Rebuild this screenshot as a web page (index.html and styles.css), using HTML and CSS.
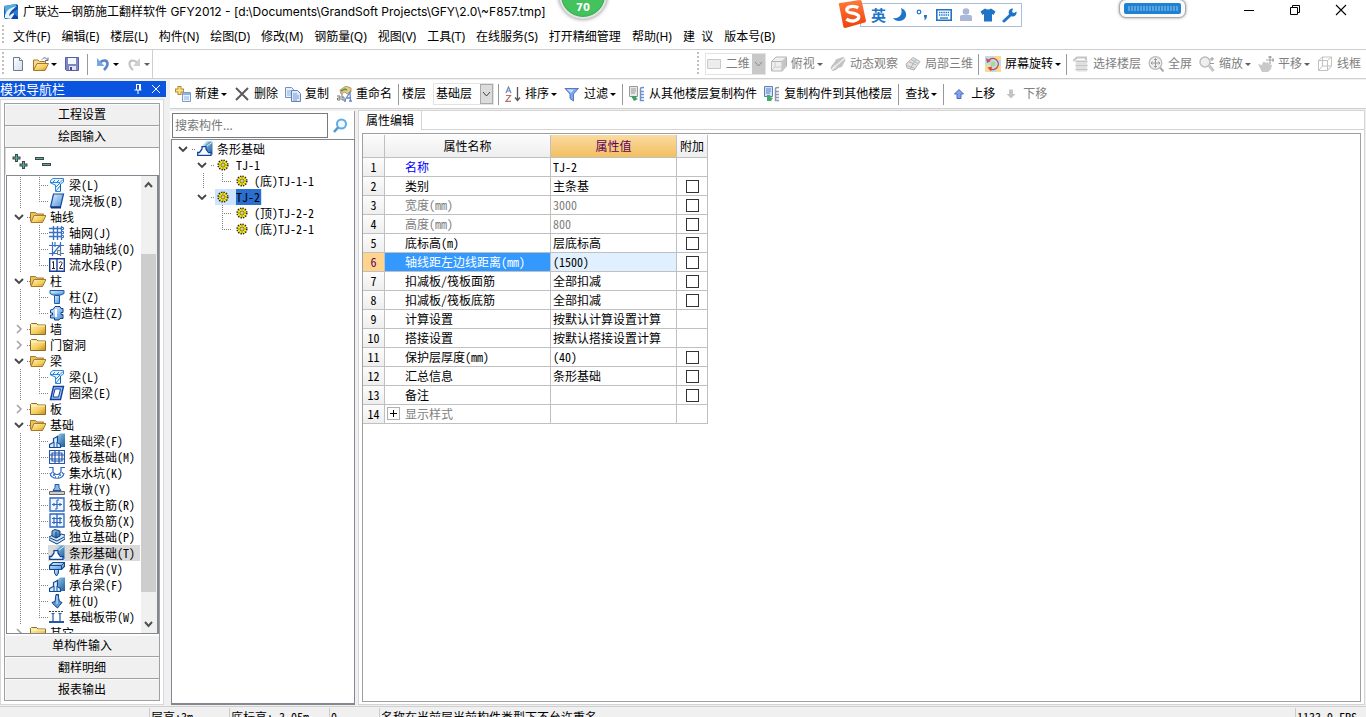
FILE: index.html
```html
<!DOCTYPE html>
<html lang="zh-CN">
<head>
<meta charset="utf-8">
<title>广联达—钢筋施工翻样软件 GFY2012</title>
<link rel="stylesheet" href="styles.css">
</head>
<body>
<svg class="defs" aria-hidden="true">
<defs>
<linearGradient id="gFold" x1="0" y1="0" x2="1" y2="1"><stop offset="0" stop-color="#fff3b8"/><stop offset=".6" stop-color="#f4cc58"/><stop offset="1" stop-color="#c98a1c"/></linearGradient>
<linearGradient id="gBlue" x1="0" y1="0" x2="1" y2="1"><stop offset="0" stop-color="#e4f3ff"/><stop offset="1" stop-color="#4a8fd8"/></linearGradient>
<linearGradient id="gDeep" x1="0" y1="0" x2="1" y2="1"><stop offset="0" stop-color="#9fd0ee"/><stop offset="1" stop-color="#1c5c9c"/></linearGradient>
<linearGradient id="gLogo" x1="0" y1="0" x2="1" y2="1"><stop offset="0" stop-color="#1b6fc0"/><stop offset="1" stop-color="#0b3fa8"/></linearGradient>
<linearGradient id="gSogou" x1="0" y1="0" x2="0" y2="1"><stop offset="0" stop-color="#ff7a3c"/><stop offset="1" stop-color="#f0400c"/></linearGradient>
<linearGradient id="gPaper" x1="0" y1="0" x2="1" y2="1"><stop offset="0" stop-color="#fff"/><stop offset="1" stop-color="#d4dcec"/></linearGradient>
</defs>
<symbol id="logo" viewBox="0 0 16 16"><path d="M1 2 13 0l2 1v14H2L1 13z" fill="url(#gLogo)"/><path d="M1 2 13 0v2L8 4 3 10z" fill="#57a9e2"/><path d="M2 11C4 5 9 3 14 2 10 5 7 7 6 12l8-6-6 9-6-1z" fill="#e8f4fd"/><path d="M10 9l5-4v8z" fill="#2c7ccc"/></symbol>
<symbol id="new" viewBox="0 0 16 16"><path d="M3.500 1.500h6l3 3v10h-9z" fill="url(#gPaper)" stroke="#6c7a92"/><path d="M9.500 1.500v3h3" fill="#fff" stroke="#6c7a92"/></symbol>
<symbol id="open" viewBox="0 0 16 16"><path d="M.5 14V4h4.500l1.500 1.500h6V8" fill="#f6dc90" stroke="#a5772c"/><path d="M.5 14.500 4 7.500h11.500L12 14.500z" fill="url(#gFold)" stroke="#a5772c"/><path d="M9 3.500c2-2.500 4-2 5.500.5M15 1.500v3h-3" fill="none" stroke="#5a6f96"/></symbol>
<symbol id="save" viewBox="0 0 16 16"><path d="M1.500 1.500h13v13h-12l-1-1z" fill="#7f86c8" stroke="#5a609f"/><path d="M4 2h8v6H4z" fill="#f4f8ff"/><path d="M5 10h7v4H5z" fill="#dfe3f2"/><path d="M6 11h2v3H6z" fill="#444a85"/></symbol>
<symbol id="undo" viewBox="0 0 16 16"><path d="M5 6.500c4-3.500 7.500-2 7.500 1.500 0 2.500-2 4.500-3.500 6" fill="none" stroke="#5b86cf" stroke-width="2.600"/><path d="M2 2v8h7.500z" fill="#79a5e4"/></symbol>
<symbol id="redo" viewBox="0 0 16 16"><path d="M11 6.500C7 3 3.500 4.500 3.500 8c0 2.500 2 4.500 3.500 6" fill="none" stroke="#c4c4c4" stroke-width="2.200"/><path d="M14 2v8H7z" fill="#cfcfcf"/></symbol>
<symbol id="add" viewBox="0 0 16 16"><path d="M4.500 0v9M0 4.500h9" stroke="#b58a28" stroke-width="4"/><path d="M4.500 1v7M1 4.500h7" stroke="#fbe38a" stroke-width="2"/><path d="M7.500 6.500h8v9h-8z" fill="#eaf2fd" stroke="#7b9ccc"/><path d="M8 7h7v2H8z" fill="#8fb2e3"/><path d="M9 11h5M9 13h5" stroke="#8fb2e3"/></symbol>
<symbol id="del" viewBox="0 0 16 16"><path d="M2 2l12 12M14 2 2 14" stroke="#5c5c5c" stroke-width="2"/></symbol>
<symbol id="copy" viewBox="0 0 16 16"><path d="M.5 1.500h6l2 2v8h-8z" fill="#e6effc" stroke="#7590c0"/><path d="M2 5h4M2 7h4M2 9h4" stroke="#8fabd8"/><path d="M6.500 4.500h6l3 3v8h-9z" fill="#dbe8fb" stroke="#6382b8"/><path d="M8 8h4M8 10h6M8 12h6M8 14h4" stroke="#7c9bd0"/></symbol>
<symbol id="rename" viewBox="0 0 16 16"><path d="M4 4 10 0l5 2v4l-4 2-2-2-4 2z" fill="#e5c987" stroke="#a9894a" stroke-width=".8"/><path d="M5 5l4-2 2 1" fill="none" stroke="#4f9a5a" stroke-width="1.500"/><path d="M1 10h3v4H1.500v-2H4M6 8v6h2v-3H6" fill="none" stroke="#777"/><path d="M8.500 15 14 6l.5 9M11 12h4M8 15h2M13 15h3" fill="none" stroke="#6489cb" stroke-width="1.300"/></symbol>
<symbol id="sort" viewBox="0 0 16 16"><path d="M1 7 3.500 1 6 7M2 5h3" fill="none" stroke="#6e86b8" stroke-width="1.200"/><path d="M1 9.500h4.500L1 15.300h5" fill="none" stroke="#b87070" stroke-width="1.200"/><path d="M12.500 1v13M10 11.500l2.500 3 2.500-3" fill="none" stroke="#555" stroke-width="1.300"/></symbol>
<symbol id="funnel" viewBox="0 0 16 16"><path d="M1 2.500h13.500L9.500 8v7L6 12.500V8z" fill="#7da7ec" stroke="#5577c4"/><path d="M3 3.500h7L7 7z" fill="#c9ddfb"/></symbol>
<symbol id="from" viewBox="0 0 16 16"><path d="M.5.5h8v10h-8z" fill="#e8e8e8" stroke="#999"/><path d="M2 3h5M2 5h5M2 7h4" stroke="#999"/><path d="M2 10l3 5 4-2-2-1 1-2z" fill="#3f9d62"/><path d="M15 1.500c-3 0-3.500 0-3.500 1.500v11.500H15M12 5.500h3M12 8.500h3M12 11.500h3" fill="none" stroke="#6f92cc" stroke-width="1.500"/></symbol>
<symbol id="to" viewBox="0 0 16 16"><path d="M.5.5h8v10h-8z" fill="#cfe0fa" stroke="#5f80bd"/><path d="M2 3h5M2 5h5M2 7h4" stroke="#5f80bd"/><path d="M3 9v6h4l2-3-3-1V9z" fill="#3fae60"/><path d="M15 1.500c-3 0-3.500 0-3.500 1.500v11.500H15M12 5.500h3M12 8.500h3M12 11.500h3" fill="none" stroke="#8f98a6" stroke-width="1.500"/></symbol>
<symbol id="up" viewBox="0 0 10 16"><path d="M5 3.500 9.500 8H7v4.500H3V8H.5z" fill="#7fa2ee" stroke="#4a68b8"/></symbol>
<symbol id="down" viewBox="0 0 10 16"><path d="M5 12.500 9.500 8H7V3.500H3V8H.5z" fill="#c4c4c4"/></symbol>
<symbol id="rect" viewBox="0 0 16 16"><path d="M1.500 3.500h13v9h-13z" fill="#ededed" stroke="#c9c9c9"/></symbol>
<symbol id="cube" viewBox="0 0 16 16"><path d="M.5 5.500 5 1h10.500v9L11 15H.5z" fill="#efefef" stroke="#b4b4b4"/><path d="M.5 5.500H11L15.500 1M11 5.500V15" fill="none" stroke="#b4b4b4"/><path d="M11.500 5.500 15 2v8l-3.500 4z" fill="#c4c4c4"/><path d="M4 6v5h7M4 11l-3 3" fill="none" stroke="#ccc"/></symbol>
<symbol id="orbit" viewBox="0 0 16 16"><ellipse cx="8" cy="8" rx="8.500" ry="3" transform="rotate(-42 8 8)" fill="#d7d7d7" stroke="#b5b5b5"/><circle cx="9" cy="7" r="4.500" fill="#c3c3c3"/><path d="M1 14 15 2" stroke="#eee" stroke-width="1.500"/></symbol>
<symbol id="part" viewBox="0 0 16 16"><path d="M1 8 8 1.500l7 4L9 14l-7-2z" fill="#e3e3e3" stroke="#b3b3b3"/><path d="M3.500 5.500 11 9M6 3.500l7 4M5 13l6-10M2 9.500l8 3" stroke="#b3b3b3" fill="none"/></symbol>
<symbol id="rotate" viewBox="0 0 16 16"><path d="M0 0h16v16H0z" fill="#b9dff3"/><path d="M0 9h6v7H0zM11 10h5v6h-5zM9 0h7v4H9z" fill="#f3dc94"/><path d="M4 4a5.500 5.500 0 1 1 1.500 9" fill="none" stroke="#d8494a" stroke-width="1.400"/><path d="M1 2l1 5 4-2zM2.500 11.500l4.500-1-1 5z" fill="#d8494a"/><circle cx="8" cy="8" r="2.500" fill="#a8d890"/></symbol>
<symbol id="floors" viewBox="0 0 16 16"><path d="M0 5 4 1.500h9V4M2.500 5.500h12M2.500 9.500h12M2.500 13.500h12" fill="none" stroke="#c4c4c4" stroke-width="2"/><path d="M3 7.500h11M3 11.500h11M4 15h10" stroke="#dedede"/></symbol>
<symbol id="full" viewBox="0 0 16 16"><circle cx="7.500" cy="7" r="6.300" fill="#efefef" stroke="#bbb" stroke-width="1.300"/><path d="M7.500 2.500v9M3 7h9M6 4l1.500-1.500L9 4M6 10l1.500 1.500L9 10M4.500 5.500 3 7l1.500 1.500M10.500 5.500 12 7l-1.500 1.500" fill="none" stroke="#999"/><path d="M12 11.500l3.500 4" stroke="#aaa" stroke-width="2"/></symbol>
<symbol id="zoomi" viewBox="0 0 16 16"><circle cx="6" cy="6" r="5" fill="#eee" stroke="#bbb" stroke-width="1.400"/><path d="M10 9.500l4.500 5.500" stroke="#c6c6c6" stroke-width="3"/><path d="M13 1v4M11 3h4M11 7.500h4" stroke="#999"/></symbol>
<symbol id="pan" viewBox="0 0 16 16"><path d="M0 8l4 1 1-3 2 0 1 1 2-1 1 2 3 1-1 4-3 3H4L2 12z" fill="#c9c9c9"/><path d="M12 0v8M8 4h8M10.500 1.500 12 0l1.500 1.500M14.500 2.500 16 4l-1.500 1.500" fill="none" stroke="#a6a6a6" stroke-width="1.200"/></symbol>
<symbol id="wire" viewBox="0 0 16 16"><path d="M1.500 4.500h9v10h-9zM5.500 1h9v9h-9zM1.500 4.500 5.500 1M10.500 4.500l4-3.500M1.500 14.500l4-4.500M10.500 14.500l4-4.500" fill="none" stroke="#c2c2c2"/></symbol>
<symbol id="find" viewBox="0 0 16 16"><circle cx="9.500" cy="6" r="4.500" fill="#f0f8ff" stroke="#5fabe4" stroke-width="2"/><path d="M6 9.500 2 14" stroke="#4c99d8" stroke-width="2.600"/></symbol>
<symbol id="fopen" viewBox="0 0 16 16"><path d="M.5 12.500v-9h5L7 5h6.500v2" fill="#e8c060" stroke="#a57c2c"/><path d="M1 13.500 4 6.500h12L12.500 13.500z" fill="url(#gFold)" stroke="#a57c2c"/></symbol>
<symbol id="fshut" viewBox="0 0 16 16"><path d="M.5 13.500v-10l1-1h5L8 4h7.500v9.500z" fill="url(#gFold)" stroke="#8f6a26"/><path d="M1 5h14" stroke="#fff5c8"/></symbol>
<symbol id="chd" viewBox="0 0 10 16"><path d="M1 6l4 4 4-4" fill="none" stroke="#444" stroke-width="1.800"/></symbol>
<symbol id="chr" viewBox="0 0 10 16"><path d="M3 4l4 4-4 4" fill="none" stroke="#a0a0a0" stroke-width="1.500"/></symbol>
<symbol id="beam" viewBox="0 0 16 16"><path d="M1.500 3.500 4 1.500h10.500v3.500l-3 2V14.500H6.500V8L1.500 6z" fill="#e6f4ff" stroke="#2f86d8"/><path d="M2 5.500h9l3-3M3 6l3-3M7 6l3-3M7 10l4-4M7 14l4-5" fill="none" stroke="#2f86d8"/><path d="M11.500 7V14" stroke="#155faf"/></symbol>
<symbol id="slab" viewBox="0 0 16 16"><path d="M4.500 1h10l-3 13h-10z" fill="url(#gBlue)" stroke="#14489c" stroke-width="1.200"/><path d="M2 14.500h10" stroke="#0f3478" stroke-width="2"/></symbol>
<symbol id="grid" viewBox="0 0 16 16"><path d="M4.500 1v14M8.500 1v14M12.500 1v14M0 3.500h12M0 7.500h12M0 11.500h12" stroke="#3a70c4" stroke-width="1.400"/><path d="M12.500 2.500h2v2h-2zM12.500 6.500h2v2h-2zM12.500 10.500h2v2h-2z" fill="#fff" stroke="#3a70c4"/></symbol>
<symbol id="aux" viewBox="0 0 16 16"><path d="M3.500 1v14M11.500 1v14M0 4.500h15M0 12.500h15M3 14 12 3M6 1v5" stroke="#3a70c4" stroke-width="1.200"/><path d="M8.500 9.500h3v4h-3z" fill="#eee" stroke="#777"/></symbol>
<symbol id="flow" viewBox="0 0 16 16"><path d="M.7 1.700h14.600v12.600H.7zM8 2v12" fill="#fff" stroke="#173f9c" stroke-width="1.400"/><path d="M3 5.500l1.500-1v7M3 11.500h3M10 6c.5-2 3.500-1.500 3 .5L10.500 11.500H14" fill="none" stroke="#222"/></symbol>
<symbol id="col" viewBox="0 0 16 16"><path d="M1 1.500h14v3l-3 1.500H4L1 4.500z" fill="url(#gBlue)" stroke="#1c5cab"/><path d="M5.500 6.500h5v8h-5z" fill="url(#gBlue)" stroke="#1c5cab"/></symbol>
<symbol id="gz" viewBox="0 0 16 16"><path d="M6 1.500h5l1 2h2v4h-2v2h2v4h-3l-1 1.500H5.500v-2H1.500v-3h2v-2h-2v-3l3-1z" fill="url(#gBlue)" stroke="#123f86"/><path d="M7 4v8" stroke="#fff" stroke-width="2"/></symbol>
<symbol id="ring" viewBox="0 0 16 16"><path d="M4.500 1.500h10l-3 13h-10z" fill="#9cc4f4" stroke="#123f9c" stroke-width="1.400"/><path d="M6 4h5.500l-2 8H4z" fill="#fff" stroke="#123f9c"/></symbol>
<symbol id="fbeam" viewBox="0 0 16 16"><path d="M7 4 11 .5h5V14h-4z" fill="url(#gDeep)"/><path d="M.5 14.500v-3l4-2v-4l4-2v6l3 2v3z" fill="#d8eaff" stroke="#0f4a94" stroke-width="1.200"/><path d="M5 9v5M8 9v5" stroke="#0f4a94"/></symbol>
<symbol id="raft" viewBox="0 0 16 16"><path d="M.5 1.500h15v13H.5zM3 4h10v8H3zM6 1v14M10 1v14M0 6h16M0 10h16" fill="none" stroke="#2457ab" stroke-width="1.200"/></symbol>
<symbol id="pit" viewBox="0 0 16 16"><path d="M0 2.500h4v5l3 2h2l3-2v-5h4M1 8c1 7 13 7 14 0" fill="none" stroke="#2c66c0" stroke-width="1.200"/><path d="M2 8h1M4 10h2M10 10h2M13 8h1M6 12h1M9 12h1" stroke="#2c66c0" stroke-width="1.500"/></symbol>
<symbol id="pier" viewBox="0 0 16 16"><path d="M6 3.500h4v3l2 3H4l2-3z" fill="#8ab8ee" stroke="#1c56a8"/><path d="M.5 10.500h15v3H.5z" fill="#ccc" stroke="#666"/></symbol>
<symbol id="rmain" viewBox="0 0 16 16"><path d="M1 1h14v13H1z" fill="#eef5ff" stroke="#2c66c0" stroke-width="1.300"/><path d="M8 3v9M3 7.500h10M5 6v3M11 6v3M8 3h2M6 12h2" stroke="#2c66c0" stroke-width="1.200"/></symbol>
<symbol id="rneg" viewBox="0 0 16 16"><path d="M1 1h14v13H1zM8 1v13" fill="#eef5ff" stroke="#2c66c0" stroke-width="1.300"/><path d="M3 5.500h10M3 9.500h10M5 4v7M11 4v7" stroke="#2c66c0" stroke-width="1.200"/></symbol>
<symbol id="iso" viewBox="0 0 16 16"><path d="M0 8l4-2 3 3 5-4 4 1v4l-8 5-8-4z" fill="#cfe6fb" stroke="#0f3f80"/><path d="M3 2l3-1.500L11 2v5L7 9 3 7z" fill="url(#gDeep)" stroke="#0f3f80"/><path d="M7 3v6M1 9l7 3 7-4" fill="none" stroke="#0f3f80"/></symbol>
<symbol id="strip" viewBox="0 0 16 16"><path d="M5 5.500 9.500.5H15.500V14L12 10.500 9 8z" fill="url(#gDeep)"/><path d="M6 5.500 10.500 1M9 6 15.500 1" stroke="#dff0fa"/><path d="M.7 14.300v-2.800h1.800L5 8V5.600h4V8l2.500 3.500H14v2.800z" fill="#fff" stroke="#10499c" stroke-width="1.300"/></symbol>
<symbol id="cap" viewBox="0 0 16 16"><path d="M.5 4.500 4 1.500h11.500v4l-3 3H.5z" fill="url(#gBlue)" stroke="#0f4a94" stroke-width="1.200"/><path d="M.5 4.500H12.500l3-3M12.500 4.500v4" fill="none" stroke="#0f4a94"/><path d="M5.500 8.500h4V12l-2 3-2-3z" fill="url(#gBlue)" stroke="#0f4a94"/></symbol>
<symbol id="pile" viewBox="0 0 16 16"><path d="M7 1.500h2.500v3l1 4 2.500 1-2.500 3-2 2.500-3-2.500-2.500-3 3-1z" fill="#5b9ad6" stroke="#0f3f80"/><path d="M8 3v8" stroke="#d6eaff"/></symbol>
<symbol id="band" viewBox="0 0 16 16"><path d="M0 2.500h15" stroke="#444" stroke-dasharray="2 1"/><path d="M0 13h15" stroke="#2457ab" stroke-width="2"/><path d="M4 4v8M2.500 4.500h3M11 4v8M9.500 4.500h3" stroke="#2457ab" stroke-width="1.200"/></symbol>
<symbol id="gear" viewBox="0 0 16 16"><circle cx="8" cy="8" r="4.800" fill="#ffee20" stroke="#222" stroke-width="1.600" stroke-dasharray="1.400 1.100"/><circle cx="8" cy="8" r="4" fill="#f7e614"/><path d="M8 4v8M4 8h8M5.500 5.500l5 5M10.500 5.500l-5 5" stroke="#6e6800" stroke-width=".7"/><circle cx="8" cy="8" r="1.300" fill="#fff" stroke="#555" stroke-width=".5"/></symbol>
<symbol id="caret" viewBox="0 0 6 16"><path d="M0 7h6L3 10z"/></symbol>
</svg>

<header class="titlebar">
  <svg class="i"><use href="#logo"/></svg>
  <h1>广联达—钢筋施工翻样软件 GFY2012 - [d:\Documents\GrandSoft Projects\GFY\2.0\~F857.tmp]</h1>
  <div class="winbtns">
    <button aria-label="最小化"><svg viewBox="0 0 12 12"><path d="M1 6.500h10" stroke="#000"/></svg></button>
    <button aria-label="还原"><svg viewBox="0 0 12 12"><path d="M1.500 3.500h7v7h-7zM3.500 3.500v-2h7v7h-2" fill="none" stroke="#000"/></svg></button>
    <button aria-label="关闭"><svg viewBox="0 0 12 12"><path d="M1 1l10 10M11 1 1 11" stroke="#000" stroke-width="1.100"/></svg></button>
  </div>
  <div class="badge">70</div>
  <div class="ime">
    <svg class="sogou" viewBox="0 0 28 28"><path d="M2 5Q1 3 3 3L22 0q2 0 2 2l4 18q0 2-2 2L8 27q-2 0-2-2z" fill="url(#gSogou)"/><path d="M20.500 7.500C16 5 9 6 9.500 10c.5 3.500 11 2 11.500 6 0 4.500-8 5.500-12 2.500" fill="none" stroke="#fff" stroke-width="3.200"/></svg>
    <b>英</b>
    <svg viewBox="0 0 16 16"><path d="M9 1c6 2 7 9 2 12-4 2-8 1-10-2 7 1 10-4 8-10z" fill="#1f74c8"/></svg>
    <svg viewBox="0 0 16 16"><circle cx="5" cy="5" r="1.800" fill="none" stroke="#1f74c8" stroke-width="1.200"/><path d="M10 8h3c0 3-1 5-3 5.500 1-1.500 1-2.500 0-3.500z" fill="#1f74c8"/></svg>
    <svg viewBox="0 0 16 16"><path d="M.8 2.800h14.400v10.400H.8z" fill="none" stroke="#1f74c8" stroke-width="1.600"/><path d="M3 5.500h10M3 8h10" stroke="#1f74c8" stroke-width="1.400" stroke-dasharray="1.400 .8"/><path d="M4 11h8" stroke="#1f74c8" stroke-width="1.300"/></svg>
    <svg viewBox="0 0 16 16"><circle cx="8" cy="4.500" r="3.300" fill="#a9b8d6"/><path d="M2 14V10q0-2 2-2h8q2 0 2 2v4z" fill="#a9b8d6"/></svg>
    <svg viewBox="0 0 16 16"><path d="M5 1.500q3 2 6 0l4.500 3-2 3.500-1.500-1v7.500H4V7L2.500 8l-2-3.500z" fill="#1f74c8"/></svg>
    <svg viewBox="0 0 16 16"><path d="M2 14 9.500 7" stroke="#1f74c8" stroke-width="3" stroke-linecap="round"/><path d="M14.500 4.500A4 4 0 1 1 11 1.500L10 5l2 1z" fill="#1f74c8"/></svg>
  </div>
  <div class="meter"><span></span></div>
</header>

<nav class="menubar grip">
  <button>文件(F)</button><button>编辑(E)</button><button>楼层(L)</button><button>构件(N)</button><button>绘图(D)</button><button>修改(M)</button><button>钢筋量(Q)</button><button>视图(V)</button><button>工具(T)</button><button>在线服务(S)</button><button>打开精细管理</button><button>帮助(H)</button><button>建&nbsp; 议</button><button>版本号(B)</button>
</nav>

<div class="bars">
  <div class="bar filebar grip">
    <button aria-label="新建"><svg class="i"><use href="#new"/></svg></button>
    <button aria-label="打开"><svg class="i"><use href="#open"/></svg><svg class="c"><use href="#caret"/></svg></button>
    <button aria-label="保存"><svg class="i"><use href="#save"/></svg></button>
    <i class="sep"></i>
    <button aria-label="撤销"><svg class="i"><use href="#undo"/></svg><svg class="c"><use href="#caret"/></svg></button>
    <button aria-label="恢复" disabled><svg class="i"><use href="#redo"/></svg><svg class="c"><use href="#caret"/></svg></button>
  </div>
  <div class="bar viewbar grip">
    <div class="combo off"><svg class="i"><use href="#rect"/></svg><select aria-label="视图维度" disabled><option>二维</option></select><svg class="drop" viewBox="0 0 13 20"><path d="M3 8l3.500 4L10 8" fill="none" stroke="#888"/></svg></div>
    <button disabled><svg class="i"><use href="#cube"/></svg>俯视<svg class="c"><use href="#caret"/></svg></button>
    <button disabled><svg class="i"><use href="#orbit"/></svg>动态观察</button>
    <button disabled><svg class="i"><use href="#part"/></svg>局部三维</button>
    <i class="sep"></i>
    <button><svg class="i"><use href="#rotate"/></svg>屏幕旋转<svg class="c"><use href="#caret"/></svg></button>
    <i class="sep"></i>
    <button disabled><svg class="i"><use href="#floors"/></svg>选择楼层</button>
    <button disabled><svg class="i"><use href="#full"/></svg>全屏</button>
    <button disabled><svg class="i"><use href="#zoomi"/></svg>缩放<svg class="c"><use href="#caret"/></svg></button>
    <button disabled><svg class="i"><use href="#pan"/></svg>平移<svg class="c"><use href="#caret"/></svg></button>
    <button disabled><svg class="i"><use href="#wire"/></svg>线框</button>
  </div>
</div>

<main class="work">
  <aside class="nav">
    <div class="navhead"><h2>模块导航栏</h2>
      <button aria-label="固定"><svg viewBox="0 0 10 10"><path d="M3 .5h5M3.500 0v6M6.500 0v6M7.500 0v6M1.500 6h7M5 6v4" stroke="#fff" fill="none"/></svg></button>
      <button aria-label="关闭"><svg viewBox="0 0 10 10"><path d="M1 1l8 8M9 1 1 9" stroke="#fff"/></svg></button>
    </div>
    <div class="frame"><div class="stack">
      <button class="fold">工程设置</button>
      <button class="fold">绘图输入</button>
      <div class="expand">
        <button aria-label="全部展开"><svg viewBox="0 0 16 16"><path d="M4.500 0v8M.5 4h8M11.500 7v8M7.500 11h8" stroke="#444" stroke-width="3"/><path d="M4.500 1v6M1.500 4h6M11.500 8v6M8.500 11h6" stroke="#4fb0a8" stroke-width="1.200"/></svg></button>
        <button aria-label="全部折叠"><svg viewBox="0 0 16 16"><path d="M0 4.500h9M7 10.500h9" stroke="#444" stroke-width="3"/><path d="M1 4.500h7M8 10.500h7" stroke="#4fb0a8" stroke-width="1.200"/></svg></button>
      </div>
      <div class="treebox">
        <ul class="tree">
          <li><ul class="kids">
            <li><svg class="i"><use href="#beam"/></svg><span>梁(L)</span></li>
            <li><svg class="i"><use href="#slab"/></svg><span>现浇板(B)</span></li></ul></li>
          <li><div class="node"><svg class="ch"><use href="#chd"/></svg><svg class="i"><use href="#fopen"/></svg><span>轴线</span></div>
            <ul class="kids">
            <li><svg class="i"><use href="#grid"/></svg><span>轴网(J)</span></li>
            <li><svg class="i"><use href="#aux"/></svg><span>辅助轴线(O)</span></li>
            <li><svg class="i"><use href="#flow"/></svg><span>流水段(P)</span></li></ul></li>
          <li><div class="node"><svg class="ch"><use href="#chd"/></svg><svg class="i"><use href="#fopen"/></svg><span>柱</span></div>
            <ul class="kids">
            <li><svg class="i"><use href="#col"/></svg><span>柱(Z)</span></li>
            <li><svg class="i"><use href="#gz"/></svg><span>构造柱(Z)</span></li></ul></li>
          <li><div class="node"><svg class="ch"><use href="#chr"/></svg><svg class="i"><use href="#fshut"/></svg><span>墙</span></div></li>
          <li><div class="node"><svg class="ch"><use href="#chr"/></svg><svg class="i"><use href="#fshut"/></svg><span>门窗洞</span></div></li>
          <li><div class="node"><svg class="ch"><use href="#chd"/></svg><svg class="i"><use href="#fopen"/></svg><span>梁</span></div>
            <ul class="kids">
            <li><svg class="i"><use href="#beam"/></svg><span>梁(L)</span></li>
            <li><svg class="i"><use href="#ring"/></svg><span>圈梁(E)</span></li></ul></li>
          <li><div class="node"><svg class="ch"><use href="#chr"/></svg><svg class="i"><use href="#fshut"/></svg><span>板</span></div></li>
          <li><div class="node"><svg class="ch"><use href="#chd"/></svg><svg class="i"><use href="#fopen"/></svg><span>基础</span></div>
            <ul class="kids">
            <li><svg class="i"><use href="#fbeam"/></svg><span>基础梁(F)</span></li>
            <li><svg class="i"><use href="#raft"/></svg><span>筏板基础(M)</span></li>
            <li><svg class="i"><use href="#pit"/></svg><span>集水坑(K)</span></li>
            <li><svg class="i"><use href="#pier"/></svg><span>柱墩(Y)</span></li>
            <li><svg class="i"><use href="#rmain"/></svg><span>筏板主筋(R)</span></li>
            <li><svg class="i"><use href="#rneg"/></svg><span>筏板负筋(X)</span></li>
            <li><svg class="i"><use href="#iso"/></svg><span>独立基础(P)</span></li>
            <li class="cur"><svg class="i"><use href="#strip"/></svg><span>条形基础(T)</span></li>
            <li><svg class="i"><use href="#cap"/></svg><span>桩承台(V)</span></li>
            <li><svg class="i"><use href="#fbeam"/></svg><span>承台梁(F)</span></li>
            <li><svg class="i"><use href="#pile"/></svg><span>桩(U)</span></li>
            <li><svg class="i"><use href="#band"/></svg><span>基础板带(W)</span></li></ul></li>
          <li><div class="node"><svg class="ch"><use href="#chr"/></svg><svg class="i"><use href="#fshut"/></svg><span>其它</span></div></li>
        </ul>
        <div class="scroll">
          <svg viewBox="0 0 15 17"><path d="M4 11l3.500-4 3.500 4" fill="none" stroke="#505050" stroke-width="2"/></svg>
          <div class="track"><div class="thumb"></div></div>
          <svg viewBox="0 0 15 17"><path d="M4 6l3.500 4L11 6" fill="none" stroke="#505050" stroke-width="2"/></svg>
        </div>
      </div>
      <button class="fold">单构件输入</button>
      <button class="fold">翻样明细</button>
      <button class="fold">报表输出</button>
    </div></div>
  </aside>

  <section class="desk">
    <div class="bar partbar">
      <button><svg class="i"><use href="#add"/></svg>新建<svg class="c"><use href="#caret"/></svg></button>
      <button><svg class="i"><use href="#del"/></svg>删除</button>
      <button><svg class="i"><use href="#copy"/></svg>复制</button>
      <button><svg class="i"><use href="#rename"/></svg>重命名</button>
      <i class="sep"></i>
      <label for="floor">楼层</label>
      <div class="combo"><select id="floor"><option>基础层</option></select><svg class="drop" viewBox="0 0 13 20"><path d="M3 8l3.500 4L10 8" fill="none" stroke="#444"/></svg></div>
      <i class="sep"></i>
      <button><svg class="i"><use href="#sort"/></svg>排序<svg class="c"><use href="#caret"/></svg></button>
      <button><svg class="i"><use href="#funnel"/></svg>过滤<svg class="c"><use href="#caret"/></svg></button>
      <i class="sep"></i>
      <button><svg class="i"><use href="#from"/></svg>从其他楼层复制构件</button>
      <button><svg class="i"><use href="#to"/></svg>复制构件到其他楼层</button>
      <i class="sep"></i>
      <button>查找<svg class="c"><use href="#caret"/></svg></button>
      <i class="sep"></i>
      <button class="move"><svg class="i"><use href="#up"/></svg>上移</button>
      <button class="move" disabled><svg class="i"><use href="#down"/></svg>下移</button>
    </div>
    <div class="panes">
      <div class="parts">
        <div class="search"><input type="text" placeholder="搜索构件..." aria-label="搜索构件"><button aria-label="搜索"><svg class="i"><use href="#find"/></svg></button></div>
        <ul class="tree ptree">
          <li><div class="node"><svg class="ch"><use href="#chd"/></svg><svg class="i"><use href="#strip"/></svg><span>条形基础</span></div>
            <ul>
              <li><div class="node sub"><svg class="ch"><use href="#chd"/></svg><div class="item"><svg class="i"><use href="#gear"/></svg><span>TJ-1</span></div></div>
                <ul class="kids"><li><svg class="i"><use href="#gear"/></svg><span>(底)TJ-1-1</span></li></ul></li>
              <li><div class="node sub"><svg class="ch"><use href="#chd"/></svg><div class="item sel"><svg class="i"><use href="#gear"/></svg><span>TJ-2</span></div></div>
                <ul class="kids bare"><li><svg class="i"><use href="#gear"/></svg><span>(顶)TJ-2-2</span></li><li><svg class="i"><use href="#gear"/></svg><span>(底)TJ-2-1</span></li></ul></li>
            </ul></li>
        </ul>
      </div>
      <div class="props">
        <div class="tabs"><button>属性编辑</button></div>
        <div class="sheet">
          <table>
            <colgroup><col class="n"><col class="k"><col class="v"><col class="x"></colgroup>
            <thead><tr><th></th><th>属性名称</th><th class="hot">属性值</th><th>附加</th></tr></thead>
            <tbody>
              <tr><th>1</th><td class="link">名称</td><td>TJ-2</td><td></td></tr>
              <tr><th>2</th><td>类别</td><td>主条基</td><td><input type="checkbox" aria-label="附加 类别"></td></tr>
              <tr class="dim"><th>3</th><td>宽度(mm)</td><td>3000</td><td><input type="checkbox" aria-label="附加 宽度"></td></tr>
              <tr class="dim"><th>4</th><td>高度(mm)</td><td>800</td><td><input type="checkbox" aria-label="附加 高度"></td></tr>
              <tr><th>5</th><td>底标高(m)</td><td>层底标高</td><td><input type="checkbox" aria-label="附加 底标高"></td></tr>
              <tr class="on"><th>6</th><td>轴线距左边线距离(mm)</td><td>(1500)</td><td><input type="checkbox" aria-label="附加 轴线距左边线距离"></td></tr>
              <tr><th>7</th><td>扣减板/筏板面筋</td><td>全部扣减</td><td><input type="checkbox" aria-label="附加 扣减板/筏板面筋"></td></tr>
              <tr><th>8</th><td>扣减板/筏板底筋</td><td>全部扣减</td><td><input type="checkbox" aria-label="附加 扣减板/筏板底筋"></td></tr>
              <tr><th>9</th><td>计算设置</td><td>按默认计算设置计算</td><td></td></tr>
              <tr><th>10</th><td>搭接设置</td><td>按默认搭接设置计算</td><td></td></tr>
              <tr><th>11</th><td>保护层厚度(mm)</td><td>(40)</td><td><input type="checkbox" aria-label="附加 保护层厚度"></td></tr>
              <tr><th>12</th><td>汇总信息</td><td>条形基础</td><td><input type="checkbox" aria-label="附加 汇总信息"></td></tr>
              <tr><th>13</th><td>备注</td><td></td><td><input type="checkbox" aria-label="附加 备注"></td></tr>
              <tr class="dim"><th>14</th><td class="more"><button aria-label="展开"><svg viewBox="0 0 11 11"><path d="M2 5.500h7M5.500 2v7" stroke="#000"/></svg></button>显示样式</td><td></td><td></td></tr>
            </tbody>
          </table>
        </div>
      </div>
    </div>
  </section>
</main>

<footer class="status"><span class="s0"></span><span class="s1">层高:3m</span><span class="s2">底标高:-3.05m</span><span class="s3">0</span><span class="s4">名称在当前层当前构件类型下不允许重名</span><span class="s5">1133.9 FPS</span></footer>
</body>
</html>
```

FILE: styles.css
```css
* { box-sizing: border-box; }
body {
  margin: 0;
  height: 100vh;
  display: flex;
  flex-direction: column;
  overflow: hidden;
  background: #f0f0f0;
  color: #000;
  font: 12px/16px "Noto Sans", "Noto Sans CJK SC", sans-serif;
}
.defs { position: absolute; width: 0; height: 0; }
h1, h2 { margin: 0; font-size: 12px; font-weight: 400; }
ul { list-style: none; margin: 0; padding: 0; }
button, select, input {
  font: inherit;
  color: inherit;
  margin: 0;
  padding: 0;
  border: 0;
  background: none;
  white-space: nowrap;
}
svg { display: block; flex: none; }
.i { width: 16px; height: 16px; }
.c { width: 6px; height: 16px; margin-left: -2px; }

.titlebar {
  position: relative;
  z-index: 1;
  display: flex;
  align-items: center;
  gap: 4px;
  height: 23px;
  padding-left: 3px;
  background: #fff;
}
.titlebar h1 { font-family: Inter, "Noto Sans CJK SC", sans-serif; }
.winbtns { display: flex; margin-left: auto; align-self: flex-start; padding-right: 2px; }
.winbtns button { width: 46px; height: 20px; display: grid; place-items: center; }
.winbtns svg { width: 12px; height: 12px; }

.badge {
  position: absolute;
  left: 559px;
  top: -29px;
  width: 48px;
  height: 48px;
  padding-top: 27px;
  border-radius: 50%;
  border: 2px solid #e4e4e4;
  background: #44c25e;
  box-shadow: 0 0 4px #777, inset 0 0 2px #1d8a3a;
  color: #fff;
  font: bold 10px/16px "DejaVu Sans", sans-serif;
  text-align: center;
}
.ime {
  position: absolute;
  left: 860px;
  top: 3px;
  display: flex;
  align-items: center;
  gap: 6px;
  height: 24px;
  padding: 0 3px 0 10px;
  border: 1px solid #a9bfdc;
  background: #fff;
  color: #1f74c8;
}
.ime b { font: bold 15px/22px "Noto Sans CJK SC", sans-serif; }
.ime svg { width: 16px; height: 16px; }
.ime .sogou { position: absolute; left: -24px; top: -4px; width: 29px; height: 29px; }
.meter {
  position: absolute;
  left: 1119px;
  top: -1px;
  width: 67px;
  height: 19px;
  padding: 3px 4px;
  border: 1px solid #aaa;
  border-radius: 7px;
  background: #fafafa;
  box-shadow: 0 0 3px #999;
}
.meter span {
  display: block;
  height: 11px;
  border: 3px solid #2181d1;
  border-radius: 2px;
  background: repeating-linear-gradient(to right, #2181d1 0 1px, #5aa6e4 1px 3px);
}

.grip { position: relative; }
.grip::before {
  content: "";
  position: absolute;
  left: 2px;
  top: 2px;
  bottom: 4px;
  width: 2px;
  background: repeating-linear-gradient(to bottom, #c0c0c0 0 2px, transparent 2px 4px);
}
.menubar {
  display: flex;
  align-items: center;
  gap: 11px;
  height: 27px;
  padding: 2px 0 0 13px;
  border-bottom: 1px solid #cfcfcf;
  background: #fff;
}
.bars { display: flex; justify-content: space-between; height: 29px; background: #fff; border-bottom: 1px solid #cfcfcf; }
.bar { display: flex; align-items: center; gap: 7px; }
.bar button { display: flex; align-items: center; gap: 4px; }
.bar button:disabled { color: #808080; fill: #606060; }
.sep { flex: none; width: 1px; height: 21px; background: #999; }
.filebar { padding: 0 2px 0 10px; border-right: 1px solid #cfcfcf; }
.viewbar { padding: 0 5px 0 10px; }
.viewbar .sep { margin: 0 -1px 0 -2px; }
.combo {
  display: flex;
  align-items: center;
  height: 22px;
  margin-right: -2px;
  border: 1px solid #e3e3e3;
  background: #fff;
}
.combo select { appearance: none; width: 46px; padding-left: 2px; }
.combo .drop { width: 13px; height: 20px; background: #dcdcdc; outline: 1px solid #aaa; outline-offset: -1px; }
.combo.off select { width: 30px; color: #808080; opacity: 1; padding-left: 4px; }
.combo.off .drop { background: #c8c8c8; outline: 0; }

.work { flex: 1; min-height: 0; display: flex; gap: 4px; padding-top: 1px; }
.nav { flex: none; width: 166px; display: flex; flex-direction: column; padding: 1px 0; }
.navhead { display: flex; align-items: center; gap: 8px; height: 16px; padding-right: 5px; background: #0a54e0; color: #fff; }
.navhead h2 { margin-right: auto; font-size: 13px; }
.navhead svg { width: 10px; height: 10px; }
.frame {
  flex: 1;
  min-height: 0;
  display: flex;
  margin: 2px 2px 0 0;
  padding: 3px;
  border: 1px solid #d8d8d8;
  background: #fff;
}
.stack { flex: 1; min-width: 0; display: flex; flex-direction: column; border: 1px solid #a0a0a0; border-bottom: 0; }
.fold { flex: none; height: 22px; padding-top: 1px; background: #f0f0f0; border-bottom: 1px solid #a0a0a0; box-shadow: inset 1px 1px #fafafa; }
.expand { flex: none; display: flex; gap: 7px; padding: 5px 6px; height: 27px; border-left: 1px solid #ddd; }
.expand svg { width: 16px; height: 16px; }
.treebox { flex: 1; min-height: 0; display: flex; margin: 0 0 1px 1px; border: 1px solid #828790; border-right-width: 2px; }
.tree { flex: 1; min-width: 0; overflow: hidden; padding-top: 1px; font-family: "Noto Sans Mono CJK SC", "Noto Sans CJK SC", monospace; white-space: nowrap; }
.node, .kids > li { display: flex; align-items: center; height: 16px; gap: 4px; }
.node { padding-left: 7px; gap: 3px; }
.node .ch { width: 10px; height: 16px; }
.node::before { content: ""; order: 1; flex: none; width: 3px; height: 1px; margin-right: -3px; background: repeating-linear-gradient(to right, #808080 0 1px, transparent 1px 2px); }
.node .i { order: 2; }
.node span { order: 3; margin-left: 1px; }
.kids {
  margin-left: 13px;
  padding-left: 19px;
  background: repeating-linear-gradient(to bottom, #808080 0 1px, transparent 1px 2px) 0 0 / 1px 100% no-repeat;
}
.kids > li::before {
  content: "";
  flex: none;
  align-self: stretch;
  width: 10px;
  margin-right: -4px;
  background:
    repeating-linear-gradient(to bottom, #808080 0 1px, transparent 1px 2px) 0 0 / 1px 100% no-repeat,
    repeating-linear-gradient(to right, #808080 0 1px, transparent 1px 2px) 0 50% / 100% 1px no-repeat;
}
.kids > li:last-child::before { background-size: 1px 50%, 100% 1px; }
.cur { background: linear-gradient(#d9d9d9, #d9d9d9) 9px 0 / 92px 100% no-repeat; }
.scroll { flex: none; width: 16px; display: flex; flex-direction: column; background: #f0f0f0; padding-right: 1px; }
.scroll svg { width: 15px; height: 17px; }
.track { flex: 1; display: flex; flex-direction: column; }
.thumb { margin-top: 61px; height: 80%; background: #cdcdcd; }

.desk { flex: 1; min-width: 0; display: flex; flex-direction: column; }
.partbar { flex: none; height: 29px; padding-left: 5px; background: #fff; border-bottom: 1px solid #cfcfcf; }
.partbar .sep { margin: 0 -1px; }
.partbar label { margin-left: -3px; }
.move { margin-left: 4px; }
.bar .move { gap: 7px; }
.move .i { width: 10px; }
.panes { flex: 1; min-height: 0; display: flex; gap: 3px; padding: 1px 1px 0 0; }
.parts { flex: none; width: 185px; display: flex; flex-direction: column; padding-bottom: 1px; }
.search { display: flex; align-items: center; height: 28px; margin-top: 1px; padding: 2px 6px 1px 2px; background: #fff; gap: 4px; border-right: 1px solid #a0a0a0; }
.search input { flex: 1; min-width: 0; height: 25px; padding: 0 2px; border: 1px solid #7a7a7a; background: #fff; }
.search input::placeholder { color: #777; opacity: 1; }
.ptree { background: #fff; border: 1px solid #828790; border-bottom-width: 2px; margin-left: 1px; }
.ptree .node { padding-left: 6px; gap: 4px; }
.ptree .node > .i { margin-left: 1px; }
.ptree .node > span { margin-left: 0; }
.ptree .node.sub { padding-left: 25px; }
.item { order: 2; display: flex; gap: 4px; padding-right: 1px; }
.sel { background: #cce4ff; }
.sel span { background: #2a6fd0; padding-right: 1px; }
.ptree .kids { margin-left: 31px; }
.ptree .kids .i { margin-left: 2px; }
.ptree .kids.bare { background: none; }

.props { flex: 1; min-width: 0; display: flex; flex-direction: column; margin-bottom: 1px; border: 1px solid #d4d4d4; background: #fff; }
.tabs { flex: none; display: flex; height: 19px; }
.tabs::after { content: ""; flex: 1; border-bottom: 1px solid #d4d4d4; border-left: 1px solid #d4d4d4; }
.tabs button { width: 62px; }
.sheet { flex: 1; min-height: 0; margin: 3px 3px 2px; padding-top: 1px; border: 1px solid #a0a0a0; }
table { border-collapse: separate; border-spacing: 0; table-layout: fixed; width: 345px; font-family: "Noto Sans Mono CJK SC", "Noto Sans CJK SC", monospace; }
.n { width: 22px; } .k { width: 166px; } .v { width: 126px; } .x { width: 31px; }
th, td { height: 19px; padding: 0 2px; border: solid #c0c0c0; border-width: 0 1px 1px 0; font-weight: 400; text-align: left; white-space: nowrap; line-height: 16px; }
th { padding: 0; text-align: center; background: linear-gradient(#fcfcfc, #eee); }
thead th { height: 23px; }
thead .hot { background: linear-gradient(#fadba2, #f2bf60); color: #600060; }
td:nth-child(2) { padding-left: 20px; }
td:last-child { text-align: center; }
.link { color: #00f; }
.dim td { color: #808080; }
.on th { background: #ffd58d; color: #600060; }
.on td:nth-child(2) { background: #3399ff; color: #fff; }
.on td:nth-child(3) { background: #e0f0ff; }
td input { appearance: none; display: block; width: 13px; height: 13px; margin: 0 auto; border: 1px solid #333; background: #fff; }
.more button { float: left; width: 13px; height: 13px; margin: 1px 0 0 -18px; border: 1px solid #b0b0b0; background: #fff; }
.more svg { width: 11px; height: 11px; }

.status { flex: none; display: flex; height: 11px; overflow: hidden; border-top: 1px solid #cfcfcf; font-family: "Noto Sans Mono CJK SC", "Noto Sans CJK SC", monospace; }
.status span { padding: 1px 1px 0; border-left: 1px solid #ccc; margin-top: 1px; white-space: nowrap; }
.status .s0 { width: 149px; border: 0; }
.s1 { width: 80px; }
.s2 { width: 100px; }
.s3 { width: 50px; }
.s4 { flex: 1; }
.s5 { width: 71px; }
```
